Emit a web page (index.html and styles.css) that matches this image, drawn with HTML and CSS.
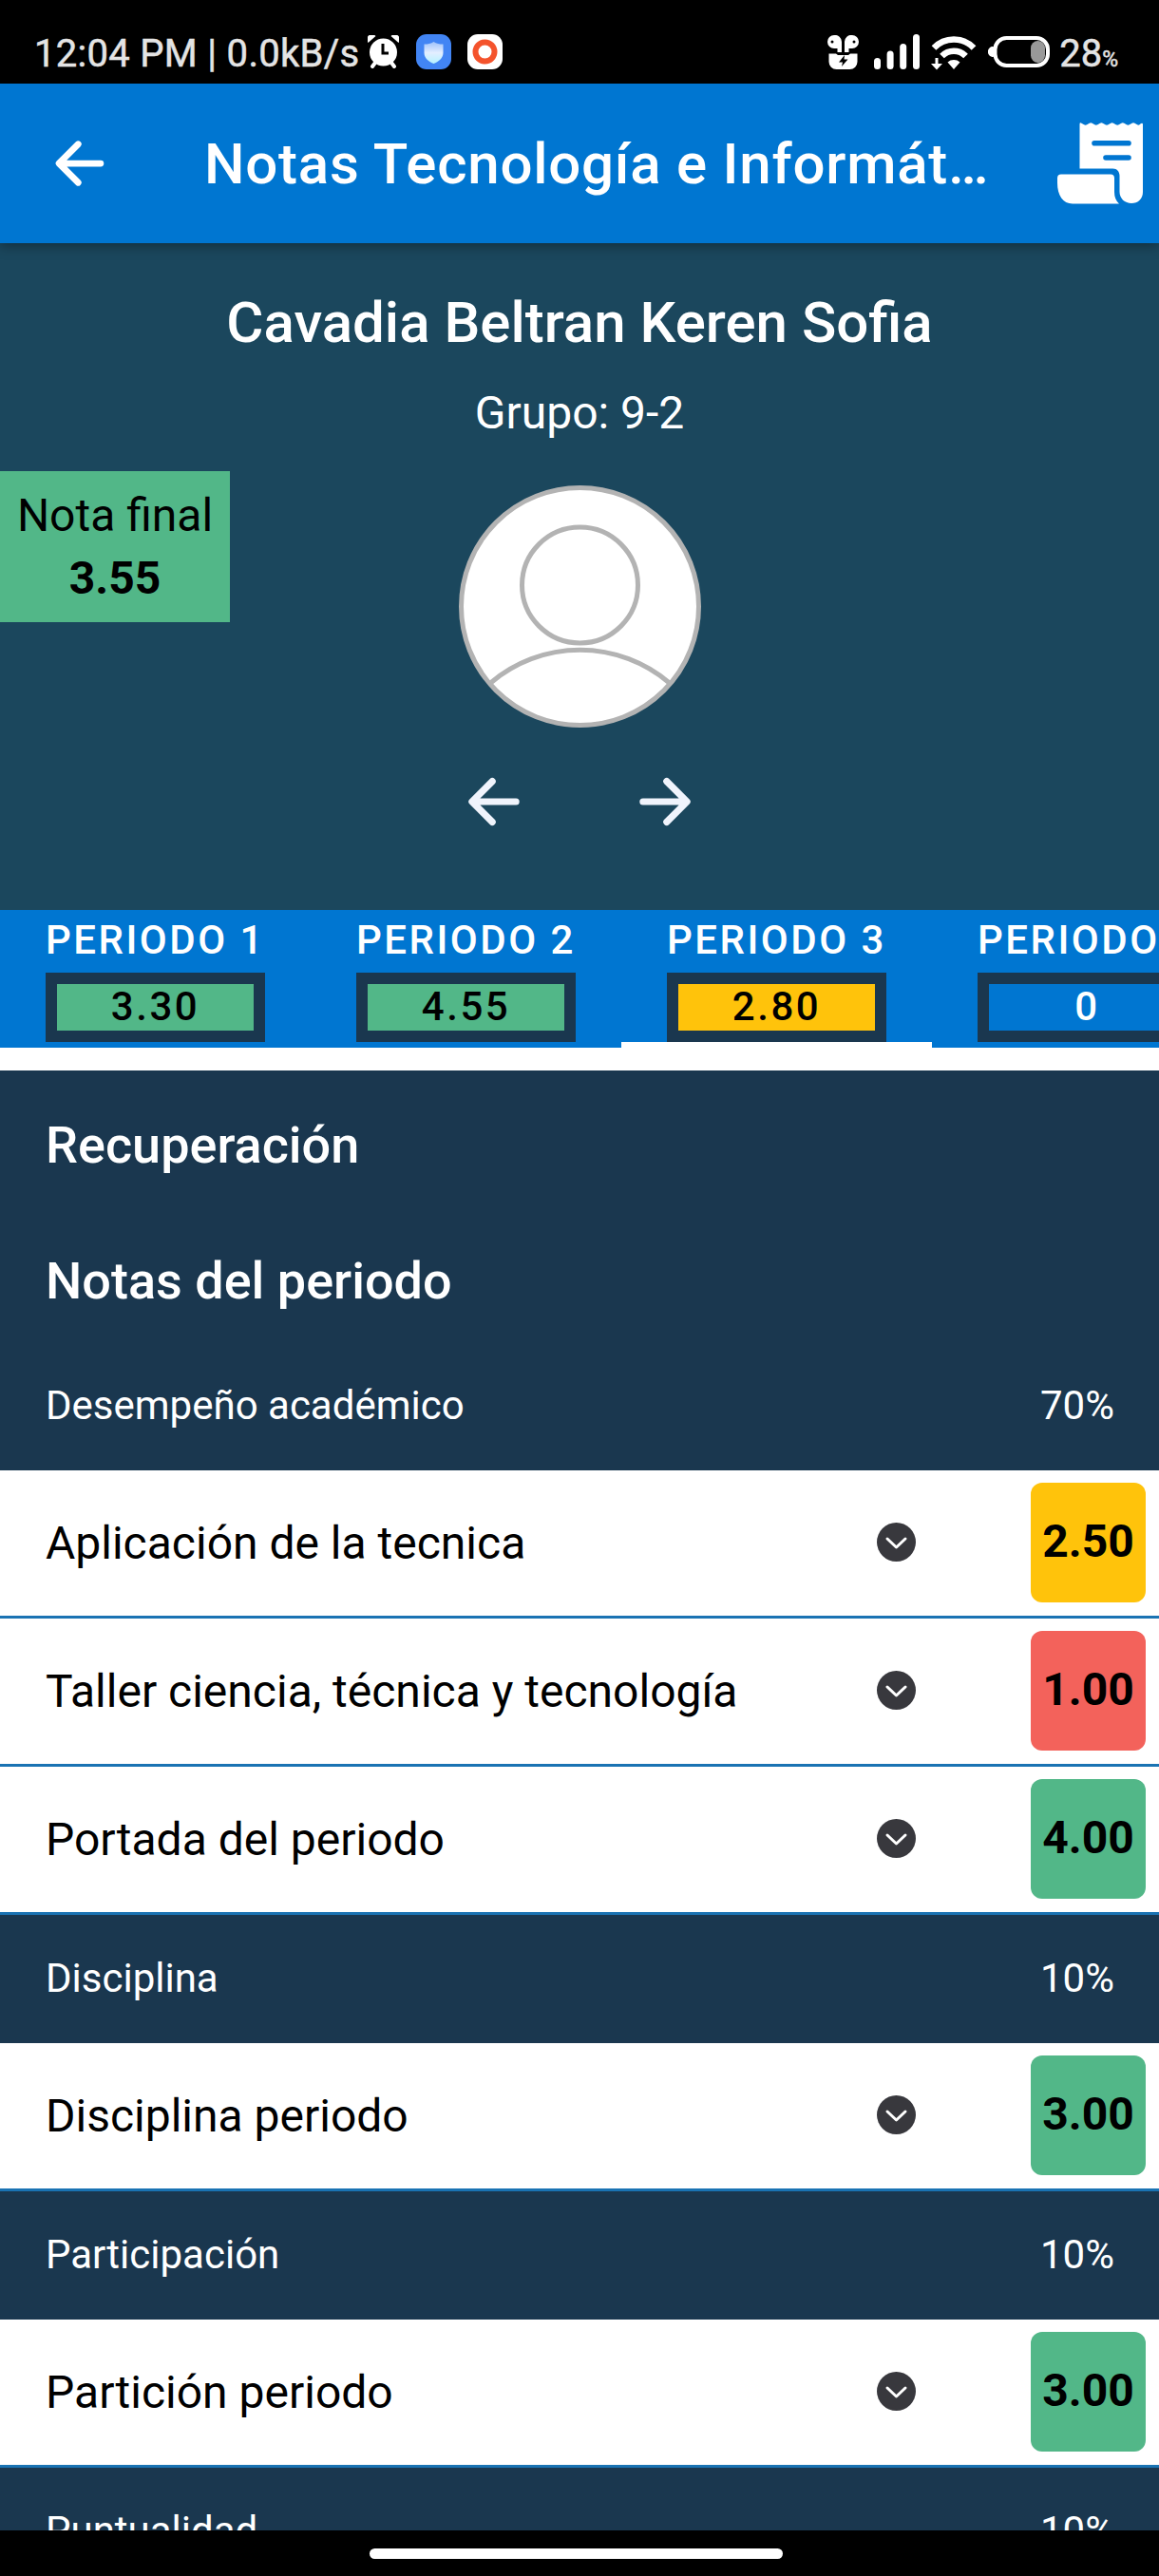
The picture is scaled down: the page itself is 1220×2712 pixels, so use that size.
FILE: index.html
```html
<!DOCTYPE html>
<html lang="es">
<head>
    <meta charset="UTF-8">
    <meta name="viewport" content="width=device-width, initial-scale=1.0">
    <title>Notas Tecnología e Informática</title>
    <link rel="stylesheet" href="styles.css">
</head>
<body>

<div class="status-bar">
    <span class="status-time">12:04 PM | 0.0kB/s</span>
    <svg class="icon-alarm" viewBox="0 0 33 35">
        <path d="M0.500 8a5 5 0 0 1 8-7zM32.500 8a5 5 0 0 0-8-7z" fill="#fff"/>
        <path d="M8 29l-3 4M25 29l3 4" stroke="#fff" stroke-width="4" stroke-linecap="round"/>
        <circle cx="16.500" cy="18" r="14.500" fill="#fff"/>
        <path d="M16 9v10h6" fill="none" stroke="#000" stroke-width="3"/>
    </svg>
    <svg class="icon-app" viewBox="0 0 37 37">
        <defs>
            <linearGradient id="shield" x1="0" y1="0" x2="0" y2="1">
                <stop offset="0" stop-color="#9fc2fb"/>
                <stop offset="0.500" stop-color="#e3eeff"/>
                <stop offset="1" stop-color="#b5f3ff"/>
            </linearGradient>
        </defs>
        <rect width="37" height="37" rx="11" fill="#4285f4"/>
        <path d="M18.500 8c3 2 6 2.500 10 2.500v9c0 6-5 9.500-10 11.500-5-2-10-5.500-10-11.500v-9c4 0 7-.5 10-2.500z" fill="url(#shield)"/>
    </svg>
    <svg class="icon-app" viewBox="0 0 37 37">
        <rect width="37" height="37" rx="11" fill="#fff"/>
        <circle cx="18.500" cy="18.500" r="10" fill="none" stroke="#f4532c" stroke-width="6"/>
    </svg>

    <div class="status-right">
        <svg class="icon-buds" viewBox="0 0 33 36">
            <path d="M7 0a7 7 0 0 1 8 7v11h-4.500v-4h-3.500a7 7 0 0 1-7-7 7 7 0 0 1 7-7zM26 0a7 7 0 0 0-8 7v11h4.500v-4h3.500a7 7 0 0 0 7-7 7 7 0 0 0-7-7z" fill="#fff"/>
            <circle cx="5" cy="7" r="1.500" fill="#000"/>
            <circle cx="28" cy="7" r="1.500" fill="#000"/>
            <path d="M1.500 19.500h7.500l2 1.500h11l2-1.500h7.500v8.500a8 8 0 0 1-8 8h-14a8 8 0 0 1-8-8z" fill="#fff"/>
            <path d="M18 21l-6 7.500h4l-1 4.500 6.500-7.500h-4z" fill="#000"/>
        </svg>
        <svg class="icon-signal" viewBox="0 0 48 37" fill="#fff">
            <rect x="0" y="25" width="7" height="12" rx="3.500"/>
            <rect x="13.600" y="17.500" width="7" height="19.500" rx="3.500"/>
            <rect x="27.200" y="10" width="7" height="27" rx="3.500"/>
            <rect x="41" y="0" width="7" height="37" rx="3.500"/>
        </svg>
        <svg class="icon-wifi" viewBox="0 0 46 36">
            <path d="M2 13.500a29 29 0 0 1 42 0M10.500 22a17.500 17.500 0 0 1 25 0" fill="none" stroke="#fff" stroke-width="6.500"/>
            <path d="M23 36l-6.500-7.500a10 10 0 0 1 13 0zM3.500 24h3v6h4.500l-6 6.500-6-6.500h4.500z" fill="#fff"/>
        </svg>
        <svg class="icon-battery" viewBox="0 0 65 33">
            <rect x="7.500" y="2" width="55.500" height="29" rx="12" fill="none" stroke="#fff" stroke-width="4"/>
            <path d="M7 11.500a5 5 0 0 0-7 5 5 5 0 0 0 7 5z" fill="#fff"/>
            <rect x="45" y="5" width="15" height="23" rx="7.500" fill="#999"/>
        </svg>
        <span class="battery-text">28<small>%</small></span>
    </div>
</div>

<header class="toolbar">
    <svg class="icon-back" viewBox="0 0 512 512">
        <path d="M244 400L100 256l144-144M120 256h292"/>
    </svg>
    <h1>Notas Tecnología e Informát…</h1>
    <svg class="icon-receipt" viewBox="0 0 90 86">
        <path d="M23.500 1.700q0-2 2-1l2.600 1.600q1.500.9 3 0l2.600-1.600q1.500-.9 3 0l2.600 1.600q1.500.9 3 0l2.600-1.600q1.500-.9 3 0l2.600 1.600q1.500.9 3 0l2.600-1.600q1.500-.9 3 0l2.600 1.600q1.500.9 3 0l2.600-1.600q1.500-.9 3 0l2.600 1.600q1.500.9 3 0l2.600-1.600q1.500-.9 3 0l2.600 1.600q1.200.9 2.400 0l1.500-1.300q2-1 2 1V73c0 7.500-5 12-12 12s-12.500-5-12.500-12v-17c0-4-2.500-7.500-7-7.500h-35z" fill="#fff"/>
        <path d="M4 54.500h52q4 0 4 4v14.500q0 8 5 12.500h-49c-10 0-16-9-16-22v-5q0-4 4-4z" fill="#fff"/>
        <path d="M39 21.800h36M51 37h24" stroke="#0076d1" stroke-width="5.600" stroke-linecap="round"/>
    </svg>
</header>

<section class="student">
    <h2>Cavadia Beltran Keren Sofia</h2>
    <p class="group">Grupo: 9-2</p>
    <svg class="avatar" viewBox="0 0 255 255">
        <g fill="#fff" stroke="#b3b3b3" stroke-width="5">
            <circle cx="127.500" cy="127.500" r="125"/>
            <circle cx="127.500" cy="105" r="61"/>
            <path d="M34 207.500a145 145 0 0 1 187 0" fill="none"/>
        </g>
    </svg>
    <div class="student-nav">
        <svg viewBox="0 0 512 512"><path d="M244 400L100 256l144-144M120 256h292"/></svg>
        <svg viewBox="0 0 512 512"><path d="M268 112l144 144-144 144M392 256H100"/></svg>
    </div>
    <div class="final-note">
        <p>Nota final</p>
        <p><b>3.55</b></p>
    </div>
</section>

<nav class="tabs">
    <div class="tab">
        <span class="tab-label">PERIODO 1</span>
        <span class="tab-note green">3.30</span>
    </div>
    <div class="tab">
        <span class="tab-label">PERIODO 2</span>
        <span class="tab-note green">4.55</span>
    </div>
    <div class="tab active">
        <span class="tab-label">PERIODO 3</span>
        <span class="tab-note yellow">2.80</span>
    </div>
    <div class="tab">
        <span class="tab-label">PERIODO 4</span>
        <span class="tab-note">0</span>
    </div>
</nav>

<main class="notes">
    <h3>Recuperación</h3>
    <h3>Notas del periodo</h3>

    <div class="category"><span>Desempeño académico</span><span>70%</span></div>
    <div class="item">
        <span class="item-name">Aplicación de la tecnica</span>
        <svg class="chevron" viewBox="0 0 41 41"><circle cx="20.500" cy="20.500" r="20.500"/><path d="M11 17l9.500 9 9.500-9"/></svg>
        <span class="badge yellow">2.50</span>
    </div>
    <div class="item">
        <span class="item-name">Taller ciencia, técnica y tecnología</span>
        <svg class="chevron" viewBox="0 0 41 41"><circle cx="20.500" cy="20.500" r="20.500"/><path d="M11 17l9.500 9 9.500-9"/></svg>
        <span class="badge red">1.00</span>
    </div>
    <div class="item">
        <span class="item-name">Portada del periodo</span>
        <svg class="chevron" viewBox="0 0 41 41"><circle cx="20.500" cy="20.500" r="20.500"/><path d="M11 17l9.500 9 9.500-9"/></svg>
        <span class="badge green">4.00</span>
    </div>

    <div class="category"><span>Disciplina</span><span>10%</span></div>
    <div class="item">
        <span class="item-name">Disciplina periodo</span>
        <svg class="chevron" viewBox="0 0 41 41"><circle cx="20.500" cy="20.500" r="20.500"/><path d="M11 17l9.500 9 9.500-9"/></svg>
        <span class="badge green">3.00</span>
    </div>

    <div class="category"><span>Participación</span><span>10%</span></div>
    <div class="item">
        <span class="item-name">Partición periodo</span>
        <svg class="chevron" viewBox="0 0 41 41"><circle cx="20.500" cy="20.500" r="20.500"/><path d="M11 17l9.500 9 9.500-9"/></svg>
        <span class="badge green">3.00</span>
    </div>

    <div class="category"><span>Puntualidad</span><span>10%</span></div>
</main>

<div class="gesture-bar"><div class="pill"></div></div>

</body>
</html>
```
FILE: styles.css
```css
* {
    box-sizing: border-box;
}

body {
    display: flex;
    flex-direction: column;
    width: 1220px;
    height: 2712px;
    margin: 0;
    overflow: hidden;
    background-color: white;
    font-family: Roboto, sans-serif;
    font-size: 48px;
    color: white;
}

h1, h2, h3, p {
    margin: 0;
    font-weight: 500;
}

svg {
    display: block;
    flex-shrink: 0;
}

.green {
    background-color: #52b788;
    color: black;
}

.yellow {
    background-color: #ffc30b;
    color: black;
}

.red {
    background-color: #f3625b;
    color: black;
}

/* phone status bar */
.status-bar {
    display: flex;
    align-items: center;
    flex-shrink: 0;
    height: 88px;
    padding: 21px 43px 0 36px;
    background-color: black;
    color: #e4e4e4;
    font-size: 40px;
}

.status-time {
    width: 351px;
    margin-top: 4px;
    white-space: nowrap;
    letter-spacing: 0.3px;
    -webkit-text-stroke: 0.5px #e4e4e4;
}

.icon-alarm {
    width: 33px;
    height: 35px;
}

.icon-app {
    width: 37px;
    height: 37px;
    margin-left: 17.5px;
}

.status-right {
    display: flex;
    align-items: center;
    margin-left: auto;
}

.icon-buds {
    width: 33px;
    height: 36px;
}

.icon-signal {
    width: 48px;
    height: 37px;
    margin-left: 16px;
}

.icon-wifi {
    width: 46px;
    height: 36px;
    margin-left: 13px;
    overflow: visible;
}

.icon-battery {
    width: 65px;
    height: 33px;
    margin-left: 13px;
}

.battery-text {
    margin: 4px 0 0 10px;
    -webkit-text-stroke: 0.5px #e4e4e4;
}

.battery-text small {
    font-size: 23px;
}

/* toolbar */
.toolbar {
    display: flex;
    align-items: center;
    flex-shrink: 0;
    height: 168px;
    padding: 0 17px 0 48px;
    background-color: #0076d1;
    box-shadow: 0 3px 12px rgba(0, 0, 0, 0.35);
    z-index: 1;
}

.icon-back {
    width: 72px;
    height: 72px;
}

.icon-back path, .student-nav path {
    fill: none;
    stroke: white;
    stroke-width: 48;
    stroke-linecap: round;
    stroke-linejoin: round;
}

.toolbar h1 {
    margin-left: 95px;
    font-size: 60px;
    letter-spacing: 0.75px;
    white-space: nowrap;
}

.icon-receipt {
    width: 90px;
    height: 86px;
    margin-left: auto;
}

/* student info */
.student {
    display: flex;
    flex-direction: column;
    align-items: center;
    flex-shrink: 0;
    position: relative;
    height: 702px;
    padding-top: 49px;
    background-color: #1b475d;
}

.student h2 {
    font-size: 60px;
    line-height: 70px;
}

.group {
    margin-top: 32px;
    font-weight: 400;
    line-height: 56px;
}

.avatar {
    width: 255px;
    height: 255px;
    margin-top: 48px;
}

.student-nav {
    display: flex;
    gap: 104px;
    margin-top: 40px;
}

.student-nav svg {
    width: 76px;
    height: 76px;
}

.student-nav path {
    stroke: #f0f4fc;
}

/* sits over the left side of the student info */
.final-note {
    position: absolute;
    top: 240px;
    left: 0;
    width: 242px;
    height: 159px;
    padding-top: 14px;
    background-color: #52b788;
    color: black;
    text-align: center;
    line-height: 66px;
}

.final-note p {
    font-weight: 400;
}

/* tabs */
.tabs {
    display: flex;
    flex-shrink: 0;
    height: 145px;
    background-color: #0076d1;
    overflow: hidden;
}

.tab {
    display: flex;
    flex-direction: column;
    flex-shrink: 0;
    width: 327px;
    padding: 6px 48px 0;
    border-bottom: 6px solid transparent;
    font-size: 42px;
    font-weight: 500;
    letter-spacing: 2.5px;
}

.tab.active {
    border-bottom-color: white;
}

.tab-label {
    height: 60px;
    line-height: 52px;
    white-space: nowrap;
}

.tab-note {
    height: 73px;
    border: 12px solid #1a374f;
    text-align: center;
    line-height: 48px;
}

/* notes list */
.notes {
    flex: 1;
    min-height: 0;
    margin-top: 24px;
    overflow: hidden;
    background-color: #1a374f;
}

.notes h3 {
    height: 143px;
    padding-left: 48px;
    font-size: 54px;
    line-height: 158px;
}

.category {
    display: flex;
    justify-content: space-between;
    height: 135px;
    padding: 0 47px 0 48px;
    font-size: 42px;
    line-height: 133px;
}

.item {
    display: flex;
    align-items: center;
    height: 156px;
    padding: 0 14px 0 48px;
    border-bottom: 3px solid #1a73b3;
    background-color: white;
    color: black;
}

.item-name {
    flex: 1;
}

.chevron {
    width: 41px;
    height: 41px;
    margin: 0 121px 2px 0;
}

.chevron circle {
    fill: #38383d;
}

.chevron path {
    fill: none;
    stroke: white;
    stroke-width: 3;
    stroke-linecap: round;
    stroke-linejoin: round;
}

.badge {
    width: 121px;
    height: 126px;
    margin-bottom: 1px;
    border-radius: 12px;
    font-weight: bold;
    line-height: 124px;
    text-align: center;
}

/* gesture bar */
.gesture-bar {
    display: flex;
    justify-content: center;
    align-items: center;
    flex-shrink: 0;
    height: 48px;
    padding-right: 7px;
    background-color: black;
}

.pill {
    width: 435px;
    height: 11px;
    border-radius: 6px;
    background-color: white;
}
```
